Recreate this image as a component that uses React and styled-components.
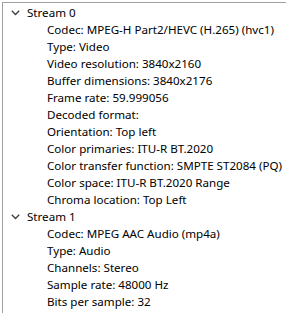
import React from 'react'
import styled, { createGlobalStyle } from 'styled-components'

const GlobalStyle = createGlobalStyle`
  html, body {
    margin: 0;
    padding: 0;
    background: #ffffff;
  }
`

const streams = [
  {
    name: 'Stream 0',
    props: [
      'Codec: MPEG-H Part2/HEVC (H.265) (hvc1)',
      'Type: Video',
      'Video resolution: 3840x2160',
      'Buffer dimensions: 3840x2176',
      'Frame rate: 59.999056',
      'Decoded format:',
      'Orientation: Top left',
      'Color primaries: ITU-R BT.2020',
      'Color transfer function: SMPTE ST2084 (PQ)',
      'Color space: ITU-R BT.2020 Range',
      'Chroma location: Top Left',
    ],
  },
  {
    name: 'Stream 1',
    props: [
      'Codec: MPEG AAC Audio (mp4a)',
      'Type: Audio',
      'Channels: Stereo',
      'Sample rate: 48000 Hz',
      'Bits per sample: 32',
    ],
  },
]

const Chevron = () => (
  <svg width='9' height='6' viewBox='0 0 9 6'>
    <path d='M0.8 0.8 L4.5 4.5 L8.2 0.8' fill='none' stroke='#3c3c3c' strokeWidth='1.3' />
  </svg>
)

const App = () => (
  <>
    <GlobalStyle />
    <Page>
      <Tree>
        {streams.map((s) => (
          <li key={s.name}>
            <Node>
              <Toggle>
                <Chevron />
              </Toggle>
              <Label>{s.name}</Label>
            </Node>
            <Children>
              {s.props.map((p) => (
                <Leaf key={p}>{p}</Leaf>
              ))}
            </Children>
          </li>
        ))}
      </Tree>
    </Page>
  </>
)

const Page = styled.div`
  width: 286px;
  height: 313px;
  padding: 2px 0 0 2px;
  box-sizing: border-box;
  overflow: hidden;
`
const Tree = styled.ul`
  list-style: none;
  margin: 0;
  padding: 1px 0 0 0;
  height: 100%;
  box-sizing: border-box;
  border-top: 1px solid #a0a0a0;
  border-left: 1px solid #a0a0a0;
  font-family: 'Noto Sans', 'Liberation Sans', sans-serif;
  font-size: 11.6px;
  color: #000000;
`
const Node = styled.div`
  display: flex;
  align-items: center;
  height: 17px;
`
const Toggle = styled.span`
  display: flex;
  align-items: center;
  justify-content: center;
  width: 24px;
`
const Label = styled.span`
  line-height: 17px;
  white-space: nowrap;
`
const Children = styled.ul`
  list-style: none;
  margin: 0;
  padding: 0 0 0 44px;
`
const Leaf = styled.li`
  height: 17px;
  line-height: 17px;
  white-space: nowrap;
`

export default App
